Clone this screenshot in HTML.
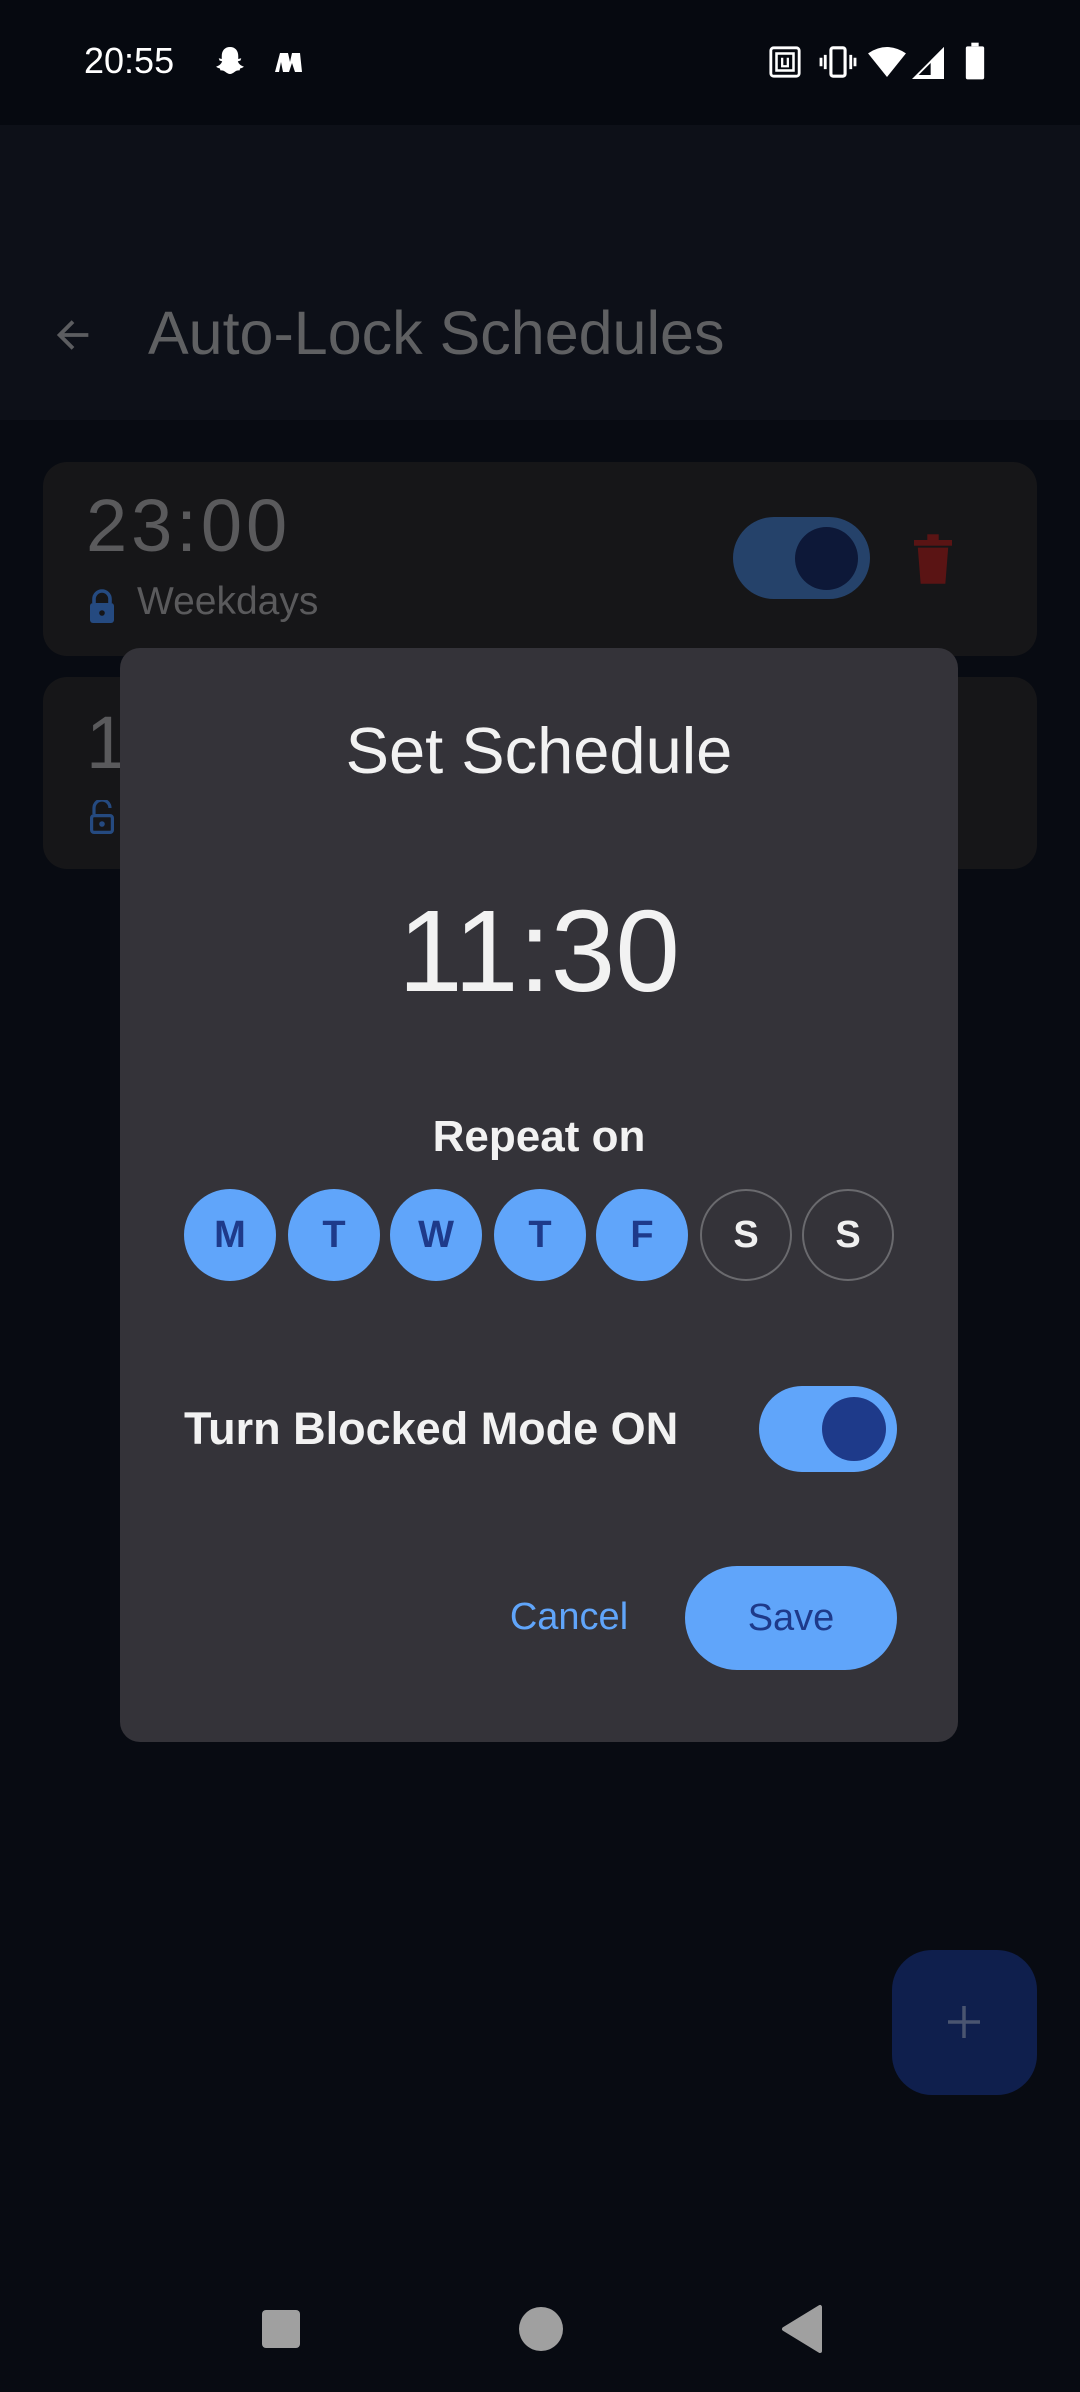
<!DOCTYPE html>
<html><head><meta charset="utf-8"><style>
*{margin:0;padding:0;box-sizing:border-box}
body{width:1080px;height:2392px;background:#080b12;position:relative;overflow:hidden;font-family:"Liberation Sans",sans-serif}
.abs{position:absolute}
.day{position:absolute;top:1189px;width:92px;height:92px;border-radius:50%;background:#60a5fa;color:#1e3a8a;font-weight:bold;font-size:38px;display:flex;align-items:center;justify-content:center}
.day.off{background:none;border:2px solid #6a6a6e;color:#f0f0f0}
</style></head><body>
<div class="abs" style="left:0;top:0;width:1080px;height:125px;background:#060910"></div>
<div class="abs" style="left:84px;top:40px;color:#fff;font-size:36px">20:55</div>
<svg class="abs" style="left:212px;top:44px" width="36" height="36" viewBox="0 0 24 24"><path d="M12 2c3.5 0 5.5 2.5 5.5 6v2l2-.5-.5 1.5-1.8.6c.8 2 2.3 3 4 3.4-.5 1-2 1-2.5 1.4l-.3 1.2c-1.3-.2-2.4.2-3.3 1C14 19.5 13 20 12 20s-2-.5-3.1-1.4c-.9-.8-2-1.2-3.3-1l-.3-1.2C4.8 16 3.3 16 2.8 15c1.7-.4 3.2-1.4 4-3.4L5 11l-.5-1.5 2 .5V8c0-3.5 2-6 5.5-6z" fill="#fff"/></svg>
<svg class="abs" style="left:272px;top:50px" width="32" height="26" viewBox="0 0 32 26"><path d="M3 22 L8 3 L16 3 L18 12 L20 3 L28 3 L30 22 L23 22 L20 13 L17 22 L11 22 L9 12 L7 22Z" fill="#fff"/></svg>
<svg class="abs" style="left:768px;top:45px" width="34" height="34" viewBox="0 0 24 24"><rect x="2" y="2" width="20" height="20" rx="2" fill="none" stroke="#fff" stroke-width="2"/><rect x="6" y="6" width="12" height="12" fill="none" stroke="#fff" stroke-width="1.8"/><path d="M10 9v6h4V9" fill="none" stroke="#fff" stroke-width="1.6"/></svg>
<svg class="abs" style="left:818px;top:45px" width="40" height="34" viewBox="0 0 28 24"><rect x="9" y="2" width="10" height="20" rx="1.5" fill="none" stroke="#fff" stroke-width="2.2"/><path d="M5 7v10M2 9v6M23 7v10M26 9v6" stroke="#fff" stroke-width="2"/></svg>
<svg class="abs" style="left:868px;top:47px" width="38" height="30" viewBox="0 0 24 19"><path d="M12 19L0 4Q12-4 24 4Z" fill="#fff"/></svg>
<svg class="abs" style="left:912px;top:47px" width="32" height="32" viewBox="0 0 24 24"><path d="M24 0V24H0Z" fill="#fff"/><path d="M20 6V21H5Z" fill="#060910"/><path d="M24 0V24H14V10Z" fill="#fff"/></svg>
<svg class="abs" style="left:964px;top:42px" width="22" height="38" viewBox="0 0 12 20"><rect x="4" y="0" width="4" height="2" fill="#fff"/><rect x="1" y="2" width="10" height="18" rx="1" fill="#fff"/></svg>

<div class="abs" style="left:0;top:125px;width:1080px;height:295px;background:#0d1018"></div>
<svg class="abs" style="left:50px;top:312px" width="46" height="46" viewBox="0 0 24 24"><path d="M20 12H5M12 5l-7 7 7 7" fill="none" stroke="#5c5d60" stroke-width="2"/></svg>
<div class="abs" style="left:148px;top:298px;color:#5f6062;font-size:61px">Auto-Lock Schedules</div>

<div class="abs" style="left:43px;top:462px;width:994px;height:194px;background:#161618;border-radius:24px"></div>
<div class="abs" style="left:86px;top:483px;color:#5a5a5c;font-size:74px;letter-spacing:4px">23:00</div>
<svg class="abs" style="left:88px;top:589px" width="28" height="34" viewBox="0 0 14 17"><path d="M3 7V5a4 4 0 0 1 8 0v2" fill="none" stroke="#254a80" stroke-width="1.8"/><rect x="1" y="7" width="12" height="10" rx="1.5" fill="#254a80"/><circle cx="7" cy="12" r="1.4" fill="#161618"/></svg>
<div class="abs" style="left:137px;top:580px;color:#5a5a5c;font-size:39px">Weekdays</div>
<div class="abs" style="left:733px;top:517px;width:137px;height:82px;border-radius:41px;background:#25426a"></div>
<div class="abs" style="left:795px;top:527px;width:63px;height:63px;border-radius:50%;background:#0d1838"></div>
<svg class="abs" style="left:914px;top:534px" width="38" height="50" viewBox="0 0 20 26"><rect x="0" y="3" width="20" height="3" fill="#5a1414"/><rect x="7" y="0" width="6" height="3" fill="#5a1414"/><path d="M2 7h16l-1.5 19h-13z" fill="#5a1414"/></svg>

<div class="abs" style="left:43px;top:677px;width:994px;height:192px;background:#161618;border-radius:24px"></div>
<div class="abs" style="left:86px;top:700px;color:#5a5a5c;font-size:74px">11</div>
<svg class="abs" style="left:88px;top:800px" width="28" height="34" viewBox="0 0 14 17"><path d="M3 7V4a4 4 0 0 1 8 0" fill="none" stroke="#254a80" stroke-width="1.6"/><rect x="1.8" y="7.8" width="10.4" height="8.4" rx="1.2" fill="none" stroke="#254a80" stroke-width="1.6"/><circle cx="7" cy="12" r="1.4" fill="#254a80"/></svg>

<div class="abs" style="left:120px;top:648px;width:838px;height:1094px;background:#343339;border-radius:20px"></div>
<div class="abs" style="left:120px;top:713px;width:838px;text-align:center;color:#f2f2f2;font-size:65px">Set Schedule</div>
<div class="abs" style="left:120px;top:884px;width:838px;text-align:center;color:#f2f2f2;font-size:116px">11:30</div>
<div class="abs" style="left:120px;top:1112px;width:838px;text-align:center;color:#f2f2f2;font-size:44px;font-weight:bold">Repeat on</div>
<div class="day" style="left:184px">M</div>
<div class="day" style="left:288px">T</div>
<div class="day" style="left:390px">W</div>
<div class="day" style="left:494px">T</div>
<div class="day" style="left:596px">F</div>
<div class="day off" style="left:700px">S</div>
<div class="day off" style="left:802px">S</div>
<div class="abs" style="left:184px;top:1403px;color:#f2f2f2;font-size:45px;font-weight:bold">Turn Blocked Mode ON</div>
<div class="abs" style="left:759px;top:1386px;width:138px;height:86px;border-radius:43px;background:#60a5fa"></div>
<div class="abs" style="left:822px;top:1397px;width:64px;height:64px;border-radius:50%;background:#1e3a8a"></div>
<div class="abs" style="left:500px;top:1596px;width:138px;text-align:center;color:#60a5fa;font-size:38px">Cancel</div>
<div class="abs" style="left:685px;top:1566px;width:212px;height:104px;border-radius:52px;background:#60a5fa;color:#1e3a8a;font-size:38px;display:flex;align-items:center;justify-content:center">Save</div>

<div class="abs" style="left:892px;top:1950px;width:145px;height:145px;border-radius:40px;background:#0f1f4d"></div>
<svg class="abs" style="left:944px;top:2002px" width="40" height="40" viewBox="0 0 40 40"><path d="M20 4v32M4 20h32" stroke="#4a5570" stroke-width="3.5"/></svg>

<div class="abs" style="left:262px;top:2310px;width:38px;height:38px;border-radius:4px;background:#a0a0a0"></div>
<div class="abs" style="left:519px;top:2307px;width:44px;height:44px;border-radius:50%;background:#a0a0a0"></div>
<svg class="abs" style="left:780px;top:2304px" width="44" height="50" viewBox="0 0 44 50"><path d="M40 3v44L4 25z" fill="#a0a0a0" stroke="#a0a0a0" stroke-width="4" stroke-linejoin="round"/></svg>
</body></html>
